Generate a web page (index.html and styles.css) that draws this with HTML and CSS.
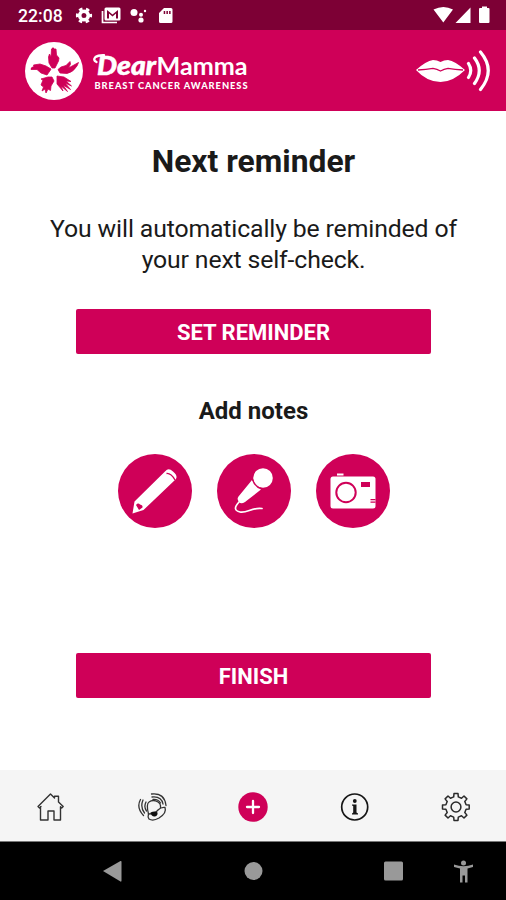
FILE: index.html
```html
<!DOCTYPE html>
<html lang="en">
<head>
<meta charset="utf-8">
<title>DearMamma</title>
<link rel="stylesheet" href="styles.css">
</head>
<body>
<div class="status">
  <span class="clock">22:08</span>
  <svg class="status-left" width="105" height="30" viewBox="72 0 105 30">
    <circle cx="84" cy="15.500" r="4.300" fill="none" stroke="#fff" stroke-width="3.600"/>
    <circle cx="84" cy="15.500" r="6.700" fill="none" stroke="#fff" stroke-width="2.800" stroke-dasharray="3.500 3.516" stroke-dashoffset="1.750"/>
    <path d="M102.500 11v11.500H117" fill="none" stroke="#fff" stroke-width="1.700"/>
    <path fill="#fff" fill-rule="evenodd" d="M106 7.500h13q1.500 0 1.500 1.500v10q0 1.500-1.500 1.500h-13q-1.500 0-1.500-1.500V9q0-1.500 1.500-1.500zM107 10v8.500h2v-5l3.500 3 3.500-3v5h2V10l-5.500 4.500z"/>
    <g fill="#fff"><circle cx="134" cy="12.500" r="3.500"/><circle cx="141" cy="14.700" r="2"/><circle cx="141" cy="20" r="2.600"/><circle cx="145" cy="11" r="1.200"/></g>
    <path fill="#fff" fill-rule="evenodd" d="M164 8h7q1.500 0 1.500 1.500v12q0 1.500-1.500 1.500h-10.500q-1.500 0-1.500-1.500V13zM163.700 11v3h1.500v-3zm2.700 0v3h1.500v-3zm2.700 0v3h1.500v-3z"/>
  </svg>
  <svg class="status-right" width="60" height="30" viewBox="430 0 60 30" fill="#fff">
    <path d="M433.500 9.500q10-5 19.500 0L443.300 22.500zM470.500 7.500V23H455.500zM480 8h2V6.500h5V8h1.500q1 0 1 1v13q0 1-1 1H480q-1 0-1-1V9q0-1 1-1z"/>
  </svg>
</div>
<header class="header">
  <svg class="logo" width="240" height="64" viewBox="20 38 240 64">
    <circle cx="54" cy="70" r="29" fill="#fff"/>
    <g fill="#cf0058" stroke="#cf0058" stroke-width=".8" stroke-linejoin="round">
      <path d="M52 67L49 62 48.500 56 49.500 53 51 56 51.500 48Q53 45.500 54.500 48L56 48 56.500 54 59 57 58.500 60 55 67z"/>
      <path d="M50.500 69L47 74 41 72 37 68.500 31 68.500Q30.500 66.500 34 65.500L33.500 64 40 63 46 65 51 68z"/>
      <path d="M58 68.500L61 66 66 64.500 70 60.500 70.500 63 68.500 67 78.500 61.500 77 65Q73 71.500 67 72.500L60 72z"/>
      <path d="M52 76L54 80 51 85 50.500 89.500 48 88 46 92 45 88 42 90 43.500 86 41 84 43 79 41 78 48 76z"/>
      <path d="M57 75L64 76 71 80.500 66 80 71.500 85 65 82 70.500 88.500 63 84 67.500 90.500 61 85 63 90 57 83z"/>
    </g>
    <text class="logo-script" x="97" y="73.500" textLength="59" lengthAdjust="spacingAndGlyphs">Dear</text>
    <path d="M96.500 61Q92.500 59 95.500 56Q98 54 104 54.200" fill="none" stroke="#fff" stroke-width="2.400" stroke-linecap="round"/>
    <text class="logo-name" x="156.500" y="73.500" textLength="91" lengthAdjust="spacingAndGlyphs">Mamma</text>
    <text class="logo-sub" x="94.500" y="88" textLength="153" lengthAdjust="spacing">BREAST CANCER AWARENESS</text>
  </svg>
  <svg class="speak" width="80" height="50" viewBox="413 46 80 50">
    <path fill="#fff" d="M416 70Q426 61 433 60Q437 60 440.500 62Q444 60 448 60Q455 61 465 70Q453 82 440.500 82Q427 82 416 70z"/>
    <path d="M418 70Q426 69.500 433 68.300Q437 69 440.500 71Q444 69 448 68.300Q455 69.500 463 70" fill="none" stroke="#cf0058" stroke-width="1.300"/>
    <path d="M468.500 63.500Q473 70.500 468.500 77.500M474.500 58Q484 70.500 474.500 83.500M480.500 52Q496 70.500 480.500 89.500" fill="none" stroke="#fff" stroke-width="3.200" stroke-linecap="round"/>
  </svg>
</header>
<main class="main">
  <h1 class="title">Next reminder</h1>
  <p class="copy">You will automatically be reminded of<br>your next self-check.</p>
  <button class="btn">SET REMINDER</button>
  <h2 class="subtitle">Add notes</h2>
  <div class="notes">
    <svg width="74" height="74" viewBox="118 454 74 74">
      <circle cx="155" cy="491" r="37" fill="#cf0058"/>
      <path fill="#fff" d="M134.500 501.500L165.500 471Q168.500 467.500 173 471.500Q178.500 476 175.500 479.500L143.500 510L132.500 513.500z"/>
      <path fill="#cf0058" d="M136 505Q138 502.500 140 504.500Q143 505 142.500 507.500L139 510z"/>
      <path d="M166.500 473.500Q171 473 175 480" fill="none" stroke="#cf0058" stroke-width="1.300"/>
    </svg>
    <svg width="74" height="74" viewBox="217 454 74 74">
      <circle cx="254" cy="491" r="37" fill="#cf0058"/>
      <circle cx="263" cy="478" r="9.800" fill="#fff"/>
      <path fill="#fff" d="M252 480L261 489.500 245 502Q241 504.500 239 502Q236.500 499 238.500 496.500z"/>
      <path d="M252.500 479.500Q255 487 262 489" fill="none" stroke="#cf0058" stroke-width="1.400"/>
      <path d="M239 502Q231.500 510 240 512C247 513.500 252 507 262 508.500" fill="none" stroke="#fff" stroke-width="1.700" stroke-linecap="round"/>
    </svg>
    <svg width="74" height="74" viewBox="316 454 74 74">
      <circle cx="353" cy="491" r="37" fill="#cf0058"/>
      <rect x="330.500" y="476.500" width="45" height="32" rx="2.500" fill="#fff"/>
      <rect x="337" y="473.500" width="6.500" height="2" fill="#fff"/>
      <circle cx="346" cy="492.500" r="9.700" fill="none" stroke="#cf0058" stroke-width="2"/>
      <path fill="#cf0058" d="M361 482h9v5h-9zM370.500 499h5v1.200h-5zM370.500 501.500h5v1.200h-5z"/>
    </svg>
  </div>
  <button class="btn finish">FINISH</button>
</main>
<nav class="tabs">
  <svg width="30" height="32" viewBox="36 791 30 32" fill="none" stroke="#333" stroke-width="1.400" stroke-linejoin="round">
    <path d="M41 806.500L39.500 808 38 806.500 50.500 794 54.500 798V796.200H58.500V802L63.200 806.500 61.700 808 60.500 806.800V820H54V811H48V820H40.500V806.800z"/>
  </svg>
  <svg width="32" height="32" viewBox="136 791 32 32" fill="none" stroke="#333" stroke-width="1.300" stroke-linecap="round">
    <path d="M148.500 814Q146 804 149 802Q153 799 158 802Q161 804 160.500 807.500"/>
    <path d="M148.500 814Q155 814 158 810Q161 807 165 807.500Q167 813 159 818Q153 821.500 149 819Q147.500 817 148.500 814z"/>
    <path d="M150.500 812.500Q155 810.500 157.500 812.500Q158 815.500 155 816.500Q151.500 817 150.500 812.500z" fill="#111" stroke="none"/>
    <path d="M151.500 794Q164.500 792.500 166 805.500M152 797Q161.500 796 163 804M153 799.500Q158 799 160.500 803M140.500 799.500Q136 807.500 143.500 815.500M143 800Q140 807 144.500 813M146 802Q143.500 807 146.500 811"/>
  </svg>
  <svg width="30" height="32" viewBox="238 791 30 32">
    <circle cx="253" cy="807" r="14.700" fill="#cf0058"/>
    <path d="M247 807H259M253 801V813" stroke="#fff" stroke-width="2.300" stroke-linecap="round"/>
  </svg>
  <svg width="30" height="32" viewBox="339 791 30 32">
    <circle cx="354.700" cy="807" r="13" fill="none" stroke="#161616" stroke-width="1.700"/>
    <circle cx="354.800" cy="801" r="1.900" fill="#161616"/>
    <path fill="#161616" d="M352 804.500H356.500V812.500L358 813.500V814.500H352V813.500L353.200 812.500V806L352 805.500z"/>
  </svg>
  <svg width="30" height="32" viewBox="440 791 30 32" fill="none" stroke="#2a2a2a" stroke-width="1.500" stroke-linejoin="round">
    <path d="M453.700 796.900L454 793.500H458L458.300 796.900 461.500 798.200 464 796 466.900 798.900 464.800 801.500 466.100 804.700 469.200 805V809L466.100 809.300 464.800 812.500 466.900 815.100 464 818 461.500 815.800 458.300 817.100 458 820.500H454L453.700 817.100 450.500 815.800 448 818 445.100 815.100 447.200 812.500 445.900 809.300 442.500 809V805L445.900 804.700 447.200 801.500 445.100 798.900 448 796 450.500 798.200z"/>
    <circle cx="456" cy="807" r="4.900"/>
  </svg>
</nav>
<div class="system">
  <svg width="380" height="34" viewBox="100 854 380 34" fill="#999">
    <path d="M103 871L120.500 861Q121.500 860.500 121.500 862V880.500Q121.500 882 120.500 881.500z"/>
    <circle cx="253.500" cy="871" r="9"/>
    <rect x="384" y="861.500" width="19" height="19" rx="1.500"/>
    <circle cx="463.500" cy="863" r="2.500"/>
    <path d="M454 864.500Q463.500 868 473 864.500V867L467.500 868.500V882.500H465V875.500H462.500V882.500H460V868.500L454 867z"/>
  </svg>
</div>
</body>
</html>
```

FILE: styles.css
```css
* { box-sizing: border-box; }
body {
  margin: 0;
  width: 506px;
  height: 900px;
  display: flex;
  flex-direction: column;
  overflow: hidden;
  background: #fff;
  color: #1a1a1a;
  font-family: Roboto, "Liberation Sans", sans-serif;
}
svg { display: block; flex: none; }
.status {
  height: 30px;
  flex: none;
  display: flex;
  align-items: center;
  padding: 0 16px 0 18px;
  background: #7d0035;
  color: #fff;
}
.clock { width: 54px; font-size: 17.600px; font-weight: 500; line-height: 30px; padding-top: 1px; }
.status-right { margin-left: auto; }
.header {
  height: 81px;
  flex: none;
  display: flex;
  align-items: center;
  justify-content: space-between;
  padding: 0 13px 0 20px;
  background: #cf0058;
}
.logo text { fill: #fff; }
.logo .logo-script { font: italic 900 26px Lato, sans-serif; stroke: #fff; stroke-width: .5px; }
.logo-name { font: 700 25px Lato, sans-serif; }
.logo-sub { font: 900 9.300px Lato, sans-serif; }
.main {
  height: 659px;
  flex: none;
  display: flex;
  flex-direction: column;
  align-items: center;
  padding-left: 1px;
  text-align: center;
}
.title { margin: 30px 0 0; font-size: 31.800px; line-height: 40px; font-weight: 700; }
.copy { margin: 33px 0 0; font-size: 24.800px; letter-spacing: -.14px; line-height: 30.500px; white-space: nowrap; }
.btn {
  width: 355px;
  height: 45px;
  margin: 34px 0 0;
  padding: 2px 0 0;
  border: 0;
  border-radius: 2px;
  background: #cf0058;
  color: #fff;
  font: 700 22px Roboto, sans-serif;
}
.subtitle { margin: 42px 0 0; font-size: 24px; line-height: 30px; font-weight: 700; }
.notes { display: flex; gap: 25px; margin-top: 28px; }
.finish { margin-top: 125px; }
.tabs {
  height: 72px;
  flex: none;
  display: grid;
  grid-template-columns: repeat(5, 101px);
  justify-content: center;
  justify-items: center;
  align-items: center;
  padding-top: 2px;
  background: #f5f5f5;
  border-bottom: 1px solid #777;
}
.system { height: 58px; flex: none; display: flex; align-items: center; padding-left: 100px; background: #000; }
```
